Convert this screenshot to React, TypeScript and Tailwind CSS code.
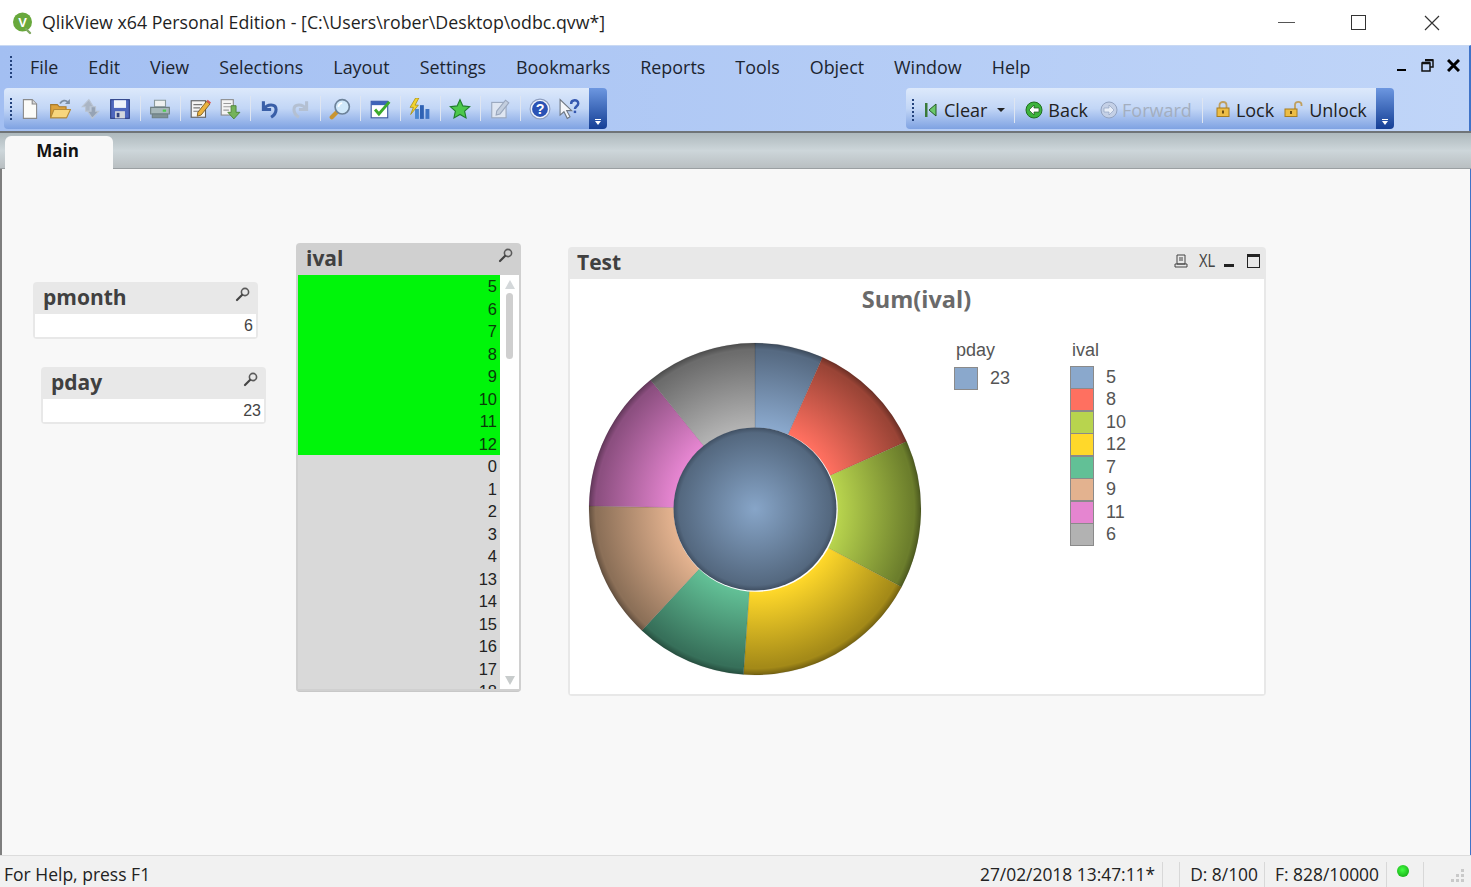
const ui = "font-['Open_Sans',Arial,sans-serif]";
const narrow = "font-['Liberation_Sans',Arial,sans-serif]";

const Sep = () => <div className="w-px h-[25px] bg-[#8fa9d0] border-r border-white/70 mx-[9.5px]" />;

const Icon = ({ children }: { children: React.ReactNode }) => (
  <svg width="22" height="22" viewBox="0 0 20 20" className="shrink-0 -mx-px">
    {children}
  </svg>
);

const NewIcon = () => (
  <Icon>
    <path d="M4 1.500h8l4 4v13H4z" fill="#fbfbf8" stroke="#8a8a8a" />
    <path d="M12 1.500v4h4" fill="#d8d8d8" stroke="#8a8a8a" />
  </Icon>
);
const OpenIcon = () => (
  <Icon>
    <path d="M1.500 6h6l2 2h6v10h-14z" fill="#dca23c" stroke="#a87a2c" />
    <path d="M1.500 18l3-7.500h15l-3.500 7.500z" fill="#f8d67e" stroke="#b58a38" />
    <path d="M10 5c2-3 5-3.500 7-1.500" fill="none" stroke="#7d8fa5" strokeWidth="1.600" />
    <path d="M19 1v4.500h-4.500z" fill="#7d8fa5" />
  </Icon>
);
const ReloadIcon = () => (
  <Icon>
    <path d="M9 1.500L3 8h3v4h4V8h3z" fill="#aab5c4" stroke="#b9c3d1" />
    <path d="M12 18.500l6-6.500h-3V8h-4v4H8z" fill="#96a3b5" stroke="#b9c3d1" />
  </Icon>
);
const SaveIcon = () => (
  <Icon>
    <rect x="1.500" y="1.500" width="17" height="17" fill="#4e67bd" stroke="#2c3f86" />
    <rect x="4.500" y="2" width="11" height="7" fill="#eef2fa" />
    <rect x="5.500" y="12" width="9" height="6.500" fill="#d3d7de" />
    <rect x="7" y="13.500" width="2.500" height="4" fill="#33437f" />
  </Icon>
);
const PrintIcon = () => (
  <Icon>
    <path d="M5 2h10v6H5z" fill="#eef1f0" stroke="#8a9a9c" />
    <path d="M1.500 8.500h17v6h-17z" fill="#a7b8ba" stroke="#6f8083" />
    <path d="M3 14.500h14v3.500H3z" fill="#7f9194" stroke="#6f8083" />
    <rect x="12.500" y="10.500" width="3" height="2" fill="#4ecb50" />
  </Icon>
);
const EditIcon = () => (
  <Icon>
    <rect x="2" y="2.500" width="13" height="15" fill="#f4f4f4" stroke="#5f5f5f" />
    <path d="M4 6h8M4 9h6M4 12h5" stroke="#777" />
    <path d="M8 13l8-10 3 2.500-8 10-3.500 1z" fill="#ecb23e" stroke="#7a5a20" strokeWidth="0.800" />
    <path d="M16 3l3 2.500 1-1.500-3-2.500z" fill="#d9534f" />
  </Icon>
);
const ExportIcon = () => (
  <Icon>
    <rect x="2" y="1.500" width="11" height="14" fill="#f4f4f4" stroke="#8a8a8a" />
    <path d="M4 5h7M4 8h7M4 11h5" stroke="#9a9a9a" />
    <path d="M11 7h4.500v6H19l-5.500 6L8 13h3z" fill="#74b35a" stroke="#4a8236" strokeWidth="0.800" />
  </Icon>
);
const UndoIcon = ({ color }: { color: string }) => (
  <Icon>
    <path d="M4 3v7.500h7" fill="none" stroke={color} strokeWidth="2.800" />
    <path d="M4.500 10c3-5 11-5 11 .5 0 3.500-2 5.500-4.500 7" fill="none" stroke={color} strokeWidth="2.800" />
  </Icon>
);
const SearchIcon = () => (
  <Icon>
    <path d="M7.500 12.500L2.500 17.500" stroke="#c99532" strokeWidth="3.800" strokeLinecap="round" />
    <circle cx="12" cy="8" r="6.500" fill="#cfe8fa" stroke="#6c8299" strokeWidth="1.500" />
    <path d="M8.500 8a4 4 0 0 1 3.500-3.500" fill="none" stroke="#fff" strokeWidth="1.500" />
  </Icon>
);
const CheckIcon = () => (
  <Icon>
    <rect x="2" y="3" width="15" height="15" fill="#fff" stroke="#3d5a9e" />
    <rect x="2" y="3" width="15" height="3.500" fill="#3e63b8" />
    <path d="M5.500 10.500l3.500 4L18.500 3.500" fill="none" stroke="#3cab2c" strokeWidth="2.600" />
  </Icon>
);
const ChartIcon = () => (
  <Icon>
    <rect x="5.500" y="10" width="3.500" height="9" fill="#4a86d0" />
    <rect x="10" y="6.500" width="3.500" height="12.500" fill="#2f62b4" />
    <rect x="15" y="10" width="3.500" height="9" fill="#3f74c4" />
    <path d="M6 0L1 8.500h3L1.500 15 8.500 6.500h-3L9 0z" fill="#f3d42e" stroke="#a58d14" strokeWidth="0.700" />
  </Icon>
);
const StarIcon = () => (
  <Icon>
    <path d="M10 1.500l2.600 5.700 6.200.7-4.600 4.100 1.300 6.100L10 15l-5.500 3.100 1.300-6.100L1.200 7.900l6.200-.7z" fill="#4cc84c" stroke="#1f7d2c" />
  </Icon>
);
const NoteIcon = () => (
  <Icon>
    <rect x="2.500" y="4" width="13" height="14" fill="#dfe6f2" stroke="#9aa7bd" />
    <path d="M7 12l8-10 3 2.500-8 10-3.500 1z" fill="#c3cede" stroke="#9aa7bd" />
  </Icon>
);
const HelpIcon = () => (
  <Icon>
    <circle cx="10" cy="10" r="9" fill="#f0f4fb" stroke="#8f9fc0" />
    <circle cx="10" cy="10" r="7.200" fill="#2a52b5" />
    <text x="10" y="14.500" textAnchor="middle" fontSize="13" fontWeight="700" fill="#fff" fontFamily="Liberation Sans">?</text>
  </Icon>
);
const WhatsThisIcon = () => (
  <svg width="22" height="22" viewBox="0 0 20 20" className="shrink-0 -mx-px">
    <path d="M1 1.500v14l3.500-3 3 6 2.500-1.500-3-5.500h4.500z" fill="#f4f6fa" stroke="#6f7782" />
    <path d="M11 5.500c0-4.500 6.500-4.500 6.500-.5 0 2.500-3 2.500-3 5" fill="none" stroke="#3558b0" strokeWidth="2.200" />
    <rect x="13.400" y="11.500" width="2.200" height="2.200" fill="#3558b0" />
  </svg>
);
const Magnifier = () => (
  <svg width="16" height="16" viewBox="0 0 16 16">
    <circle cx="10" cy="6" r="3.600" fill="none" stroke="#5a5a5a" strokeWidth="1.600" />
    <path d="M7 9l-5 5" stroke="#444" strokeWidth="2.200" strokeLinecap="round" />
  </svg>
);
const LockIcon = ({ open }: { open?: boolean }) => (
  <svg width={open ? 20 : 14} height="18" viewBox={open ? "0 0 20 18" : "0 0 14 18"} className="shrink-0 -mt-[3px]">
    {open ? (
      <>
        <path d="M11 9V4.500c0-3.500 6.500-3.500 6.500 0V6" fill="none" stroke="#c0a060" strokeWidth="1.800" />
        <rect x="1" y="9" width="12" height="7.500" fill="#edbd45" stroke="#a67c20" />
        <rect x="6" y="11" width="2" height="3" fill="#6b4d10" />
      </>
    ) : (
      <>
        <path d="M3.500 8V5c0-4 7-4 7 0v3" fill="none" stroke="#c0a060" strokeWidth="1.800" />
        <rect x="1" y="8" width="12" height="8.500" fill="#edbd45" stroke="#a67c20" />
        <rect x="6" y="10.500" width="2" height="3" fill="#6b4d10" />
      </>
    )}
  </svg>
);
const Grip = () => (
  <div className="flex flex-col gap-[2px] mr-[7px]">
    {[0, 1, 2, 3, 4, 5].map((i) => (
      <div key={i} className="w-[2px] h-[2px] bg-[#23427c]" />
    ))}
  </div>
);
const Chevron = () => (
  <div className="w-[18px] h-[41px] rounded-r-sm bg-gradient-to-b from-[#6d97e0] to-[#153f96] flex flex-col items-center justify-end pb-[4px]">
    <div className="w-[6px] h-px bg-white mb-px" />
    <div className="w-0 h-0 border-x-[3px] border-x-transparent border-t-[4px] border-t-white" />
  </div>
);

const menus = ["File", "Edit", "View", "Selections", "Layout", "Settings", "Bookmarks", "Reports", "Tools", "Object", "Window", "Help"];

const listValues = ["0", "1", "2", "3", "4", "13", "14", "15", "16", "17", "18"];
const selected = ["5", "6", "7", "8", "9", "10", "11", "12"];

// pie slices: angles in degrees clockwise from 12 o'clock
const slices = [
  { id: "a", from: 0, to: 24, c: "#8aa8cc", d: "#566a82" },
  { id: "b", from: 24, to: 66, c: "#ff7060", d: "#9a4436" },
  { id: "c", from: 66, to: 118, c: "#b8d44e", d: "#6c7e2c" },
  { id: "d", from: 118, to: 184, c: "#ffd82a", d: "#a48a18" },
  { id: "e", from: 184, to: 223, c: "#62c096", d: "#37705a" },
  { id: "f", from: 223, to: 271, c: "#e3b28f", d: "#8c7058" },
  { id: "g", from: 271, to: 321, c: "#e585d0", d: "#8c4f80" },
  { id: "h", from: 321, to: 360, c: "#b2b2b2", d: "#6c6c6c" },
];
const R = 166;
const r0 = 80;
const C = 170;

const pt = (rad: number, deg: number) => {
  const a = (deg * Math.PI) / 180;
  return `${(C + rad * Math.sin(a)).toFixed(2)} ${(C - rad * Math.cos(a)).toFixed(2)}`;
};
const wedge = (from: number, to: number) =>
  `M${pt(r0, from)}L${pt(R, from)}A${R} ${R} 0 0 1 ${pt(R, to)}L${pt(r0, to)}A${r0} ${r0} 0 0 0 ${pt(r0, from)}Z`;

const Donut = () => (
  <svg width="340" height="340" viewBox="0 0 340 340">
    <defs>
      {slices.map((s) => (
        <radialGradient key={s.id} id={s.id} gradientUnits="userSpaceOnUse" cx={C} cy={C} r={R}>
          <stop offset="0.5" stopColor={s.c} />
          <stop offset="0.95" stopColor={s.d} />
          <stop offset="1" stopColor={s.d} />
        </radialGradient>
      ))}
      <radialGradient id="hub" gradientUnits="userSpaceOnUse" cx={C} cy={C} r="82">
        <stop offset="0" stopColor="#87a5c8" />
        <stop offset="0.93" stopColor="#54687f" />
        <stop offset="1" stopColor="#3e4d60" />
      </radialGradient>
      <radialGradient id="rim" gradientUnits="userSpaceOnUse" cx={C} cy={C} r={R}>
        <stop offset="0.96" stopColor="#000" stopOpacity="0" />
        <stop offset="1" stopColor="#000" stopOpacity="0.3" />
      </radialGradient>
    </defs>
    {slices.map((s) => (
      <path key={s.id} d={wedge(s.from, s.to)} fill={`url(#${s.id})`} stroke="#000" strokeOpacity="0.12" strokeWidth="0.8" />
    ))}
    <circle cx={C} cy={C} r={R} fill="url(#rim)" />
    <circle cx={C + 0.8} cy={C + 0.8} r="82" fill="#fff" />
    <circle cx={C} cy={C} r="81.500" fill="url(#hub)" />
  </svg>
);

const legend = [
  ["5", "#8aa8cc"],
  ["8", "#ff7060"],
  ["10", "#b8d44e"],
  ["12", "#ffd82a"],
  ["7", "#62c096"],
  ["9", "#e3b28f"],
  ["11", "#e585d0"],
  ["6", "#b2b2b2"],
];

const Swatch = ({ color }: { color: string }) => (
  <div className="w-[24px] h-[23px] border border-[#8a8a8a]" style={{ backgroundColor: color }} />
);

const ListBoxSmall = ({ title, value, className }: { title: string; value: string; className: string }) => (
  <div className={`absolute w-[225px] h-[57px] bg-[#e8e8e8] rounded-sm px-[2px] pb-[2px] flex flex-col ${className}`}>
    <div className="h-[32px] flex items-center justify-between pl-[8px] pr-[5px] text-[21px] font-bold text-[#404040]">
      <span>{title}</span>
      <span className="-mt-2"><Magnifier /></span>
    </div>
    <div className={`${narrow} flex-1 bg-white text-right text-[16px] leading-[23px] pr-[3px] text-[#444]`}>{value}</div>
  </div>
);

export default function App() {
  return (
    <div className={`${ui} w-[1471px] h-[887px] overflow-hidden flex flex-col bg-white text-[#1f1f1f]`}>
      {/* title bar */}
      <div className="h-[45px] shrink-0 flex items-center pl-[11px] bg-white">
        <svg width="24" height="24" viewBox="0 0 24 24" className="shrink-0 mr-[7px]">
          <circle cx="11.500" cy="11" r="9.500" fill="#68a83c" />
          <path d="M15 18l4 4" stroke="#7fa860" strokeWidth="2.400" strokeLinecap="round" />
          <text x="11.500" y="16" textAnchor="middle" fontSize="13" fontWeight="700" fill="#fff" fontFamily="Liberation Sans">V</text>
        </svg>
        <span className="text-[17.750px]">QlikView x64 Personal Edition - [C:\Users\rober\Desktop\odbc.qvw*]</span>
        <div className="ml-auto flex items-center mr-[31px]">
          <div className="w-[17px] h-[1.500px] bg-[#555]" />
          <div className="ml-[56px] w-[15px] h-[15px] border-[1.500px] border-[#333]" />
          <svg width="16" height="16" viewBox="0 0 16 16" className="ml-[58px]"><path d="M1 1l14 14M15 1L1 15" stroke="#333" strokeWidth="1.200" /></svg>
        </div>
      </div>

      {/* menu bar */}
      <div className="h-[43px] shrink-0 bg-gradient-to-r from-[#a3bff2] to-[#c0d5f8] flex items-center border-t border-[#c9d9f3] border-r-2 border-r-[#3f73c8]">
        <div className="ml-[10px] mr-[18px]"><Grip /></div>
        <div className="flex gap-[30px] text-[17.900px] text-[#1c2530] -ml-[7px]">
          {menus.map((m) => (
            <span key={m}>{m}</span>
          ))}
        </div>
        <div className="ml-auto flex items-center mr-[9px] -mt-[3px]">
          <div className="w-[9px] h-[2px] bg-black mt-[9px]" />
          <svg width="13" height="13" viewBox="0 0 13 13" className="ml-[15px]"><path d="M4 1h8v7H9M1 4h8v8H1z" fill="none" stroke="#111" strokeWidth="1.500" /><path d="M4 1h8M1 4h8" stroke="#111" strokeWidth="2.500" /></svg>
          <svg width="13" height="13" viewBox="0 0 13 13" className="ml-[13px]"><path d="M1 1l11 11M12 1L1 12" stroke="#000" strokeWidth="3" /></svg>
        </div>
      </div>

      {/* toolbars */}
      <div className="h-[43px] shrink-0 bg-gradient-to-r from-[#a3bff2] to-[#c0d5f8] flex items-start border-r-2 border-r-[#3f73c8]">
        <div className="ml-[4px] h-[41px] flex items-stretch">
          <div className="w-[585px] bg-gradient-to-b from-[#dde9fb] via-[#c2d6f6] to-[#7fa2e2] rounded-l-sm flex items-center pl-[6px]">
            <Grip />
            <div className="ml-[1px]"><NewIcon /></div>
            <div className="ml-[10px]"><OpenIcon /></div>
            <div className="ml-[10px]"><ReloadIcon /></div>
            <div className="ml-[10px]"><SaveIcon /></div>
            <Sep />
            <PrintIcon />
            <Sep />
            <EditIcon />
            <div className="ml-[10px]"><ExportIcon /></div>
            <Sep />
            <UndoIcon color="#3a5fa8" />
            <div className="ml-[10px] -scale-x-100"><UndoIcon color="#b4c0d2" /></div>
            <Sep />
            <SearchIcon />
            <Sep />
            <CheckIcon />
            <Sep />
            <ChartIcon />
            <Sep />
            <StarIcon />
            <Sep />
            <NoteIcon />
            <Sep />
            <HelpIcon />
            <div className="ml-[10px]"><WhatsThisIcon /></div>
          </div>
          <Chevron />
        </div>
        <div className="ml-[299px] h-[41px] flex items-stretch">
          <div className="w-[470px] bg-gradient-to-b from-[#dde9fb] via-[#c2d6f6] to-[#7fa2e2] rounded-l-sm flex items-center pl-[6px] pt-[3px] text-[18px] text-[#222]">
            <Grip />
            <svg width="16" height="18" viewBox="0 0 16 18" className="mr-[5px] ml-[2px]"><path d="M2 2h2.500v14H2z" fill="#3a7a3a" /><path d="M13 3v12L6 9z" fill="#6ac86a" stroke="#245a24" /></svg>
            <span>Clear</span>
            <div className="ml-[10px] w-0 h-0 border-x-[4px] border-x-transparent border-t-[4px] border-t-[#222]" />
            <div className="ml-[9px] mr-[10px] w-px h-[25px] bg-[#8fa9d0] border-r border-white/70" />
            <svg width="18" height="18" viewBox="0 0 18 18" className="mr-[5px]"><circle cx="9" cy="9" r="8" fill="#3db33d" stroke="#1f6f1f" /><path d="M9 4L4 9l5 5V11h5V7H9z" fill="#fff" stroke="#1f4f1f" strokeWidth="0.700" /></svg>
            <span>Back</span>
            <svg width="18" height="18" viewBox="0 0 18 18" className="ml-[12px] mr-[4px]"><circle cx="9" cy="9" r="8" fill="#c4d0e6" stroke="#93a3c0" /><path d="M9 4l5 5-5 5V11H4V7h5z" fill="#e8eef8" stroke="#93a3c0" strokeWidth="0.700" /></svg>
            <span className="text-[#a3aebf]">Forward</span>
            <div className="ml-[10px] mr-[13px] w-px h-[25px] bg-[#8fa9d0] border-r border-white/70" />
            <LockIcon />
            <span className="ml-[6px]">Lock</span>
            <span className="ml-[10px]"><LockIcon open /></span>
            <span className="ml-[5px]">Unlock</span>
          </div>
          <Chevron />
        </div>
      </div>

      {/* tab strip */}
      <div className="h-[38px] shrink-0 bg-gradient-to-b from-[#aeb9bd] via-[#cdd6da] to-[#b9bfc2] border-t-2 border-[#6f7478] flex items-end pl-[5px] border-b border-b-[#9a9fa2]">
        <div className="w-[108px] h-[33px] -mb-px rounded-t-md bg-[#f8f8f8] flex items-center justify-center text-[17px] font-bold text-[#111] pr-[3px] pb-[4px]">Main</div>
      </div>

      {/* sheet */}
      <div className="relative flex-1 bg-[#f8f8f8] border-l-2 border-[#7e7e7e] border-r border-r-[#3f73c8]">
        <ListBoxSmall title="pmonth" value="6" className="left-[31px] top-[113px]" />
        <ListBoxSmall title="pday" value="23" className="left-[39px] top-[198px]" />

        {/* ival list box */}
        <div className="absolute left-[294px] top-[74px] w-[225px] h-[449px] bg-[#d0d0d0] rounded-sm px-[2px] pb-[2px] flex flex-col border-b border-[#c8c8c8]">
          <div className="h-[32px] shrink-0 flex items-center justify-between pl-[8px] pr-[5px] text-[21px] font-bold text-[#404040]">
            <span>ival</span>
            <span className="-mt-2"><Magnifier /></span>
          </div>
          <div className={`${narrow} flex-1 flex min-h-0`}>
            <div className="flex-1 flex flex-col overflow-hidden text-right text-[16.500px] leading-[22.500px] text-[#222]">
              {selected.map((v) => (
                <div key={v} className="bg-[#00f50a] h-[22.500px] shrink-0 pr-[3px] text-[#0a3a0a]">{v}</div>
              ))}
              {listValues.map((v) => (
                <div key={v} className="bg-[#d9d9d9] h-[22.500px] shrink-0 pr-[3px]">{v}</div>
              ))}
            </div>
            <div className="w-[19px] shrink-0 bg-white flex flex-col items-center pt-[5px] pb-[4px]">
              <div className="w-0 h-0 border-x-[5px] border-x-transparent border-b-[9px] border-b-[#d4d8da]" />
              <div className="mt-[4px] w-[7px] h-[66px] rounded-full bg-[#cfcfcf]" />
              <div className="mt-auto w-0 h-0 border-x-[5px] border-x-transparent border-t-[9px] border-t-[#c8cccc]" />
            </div>
          </div>
        </div>

        {/* chart */}
        <div className="absolute left-[566px] top-[78px] w-[698px] h-[449px] bg-[#e8e8e8] rounded-sm px-[2px] pb-[2px] flex flex-col">
          <div className="h-[32px] shrink-0 flex items-center pl-[7px] pr-[4px] text-[21px] font-bold text-[#404040]">
            <span>Test</span>
            <div className="ml-auto flex items-center text-[#444] -mt-1">
              <svg width="15" height="15" viewBox="0 0 15 15" className="mr-[2px]"><path d="M3 1h8v9H3zM1 10h12v3H1z" fill="none" stroke="#444" /><path d="M5 4h4M5 6h4" stroke="#444" /></svg>
              <span className={`${narrow} ml-[5px] text-[18px] leading-[20px] font-normal scale-x-75`}>XL</span>
              <div className="ml-[6px] mt-[8px] w-[10px] h-[3px] bg-[#222]" />
              <div className="ml-[13px] w-[13px] h-[14px] border border-[#222] border-t-[3px]" />
            </div>
          </div>
          <div className="flex-1 bg-white relative">
            <div className="text-center text-[23.500px] font-bold text-[#6a6a6a] pt-[5px] leading-[30px] pr-[1px]">Sum(ival)</div>
            <div className="absolute left-[15px] top-[60px]"><Donut /></div>
            <div className={`${narrow} absolute left-[384px] top-[59px] text-[18px] text-[#555] flex`}>
              <div className="w-[116px]">
                <div className="leading-[24px] pl-[2px]">pday</div>
                <div className="flex items-center gap-[12px] mt-[3px] text-[18px]">
                  <Swatch color="#8aa8cc" />
                  <span>23</span>
                </div>
              </div>
              <div>
                <div className="leading-[24px] pl-[2px]">ival</div>
                <div className="flex flex-col mt-[4px]">
                  {legend.map(([v, c]) => (
                    <div key={v} className="flex items-center gap-[12px] h-[22.500px]">
                      <Swatch color={c} />
                      <span>{v}</span>
                    </div>
                  ))}
                </div>
              </div>
            </div>
          </div>
        </div>
      </div>

      {/* status bar */}
      <div className="h-[32px] shrink-0 bg-[#f1f1f1] border-t border-[#dcdcdc] flex items-center text-[17.400px] text-[#222] pl-[4px] relative">
        <span className="pt-[5px] text-[17.500px]">For Help, press F1</span>
        <div className="ml-auto flex items-center h-full pt-[5px]">
          <span>27/02/2018 13:47:11*</span>
          <div className="ml-[7px] w-px h-[25px] bg-[#d8d8d8]" />
          <div className="ml-[16px] w-px h-[25px] bg-[#d8d8d8]" />
          <span className="ml-[10px]">D: 8/100</span>
          <div className="ml-[6px] w-px h-[25px] bg-[#d8d8d8]" />
          <span className="ml-[10px]">F: 828/10000</span>
          <div className="ml-[7px] w-px h-[25px] bg-[#d8d8d8]" />
          <div className="ml-[10px] -mt-[6px] w-[12px] h-[12px] rounded-full bg-[radial-gradient(circle_at_45%_40%,#44ff44,#0a9a0a)]" />
          <div className="ml-[14px] w-px h-[25px] bg-[#d8d8d8]" />
          <svg width="16" height="16" viewBox="0 0 16 16" className="ml-[26px] mr-[5px] mt-[4px]">
            <path d="M11 1h3v3h-3zM6 6h3v3H6zM11 6h3v3h-3zM1 11h3v3H1zM6 11h3v3H6zM11 11h3v3h-3z" fill="#c9c9c9" />
          </svg>
        </div>
      </div>
    </div>
  );
}
